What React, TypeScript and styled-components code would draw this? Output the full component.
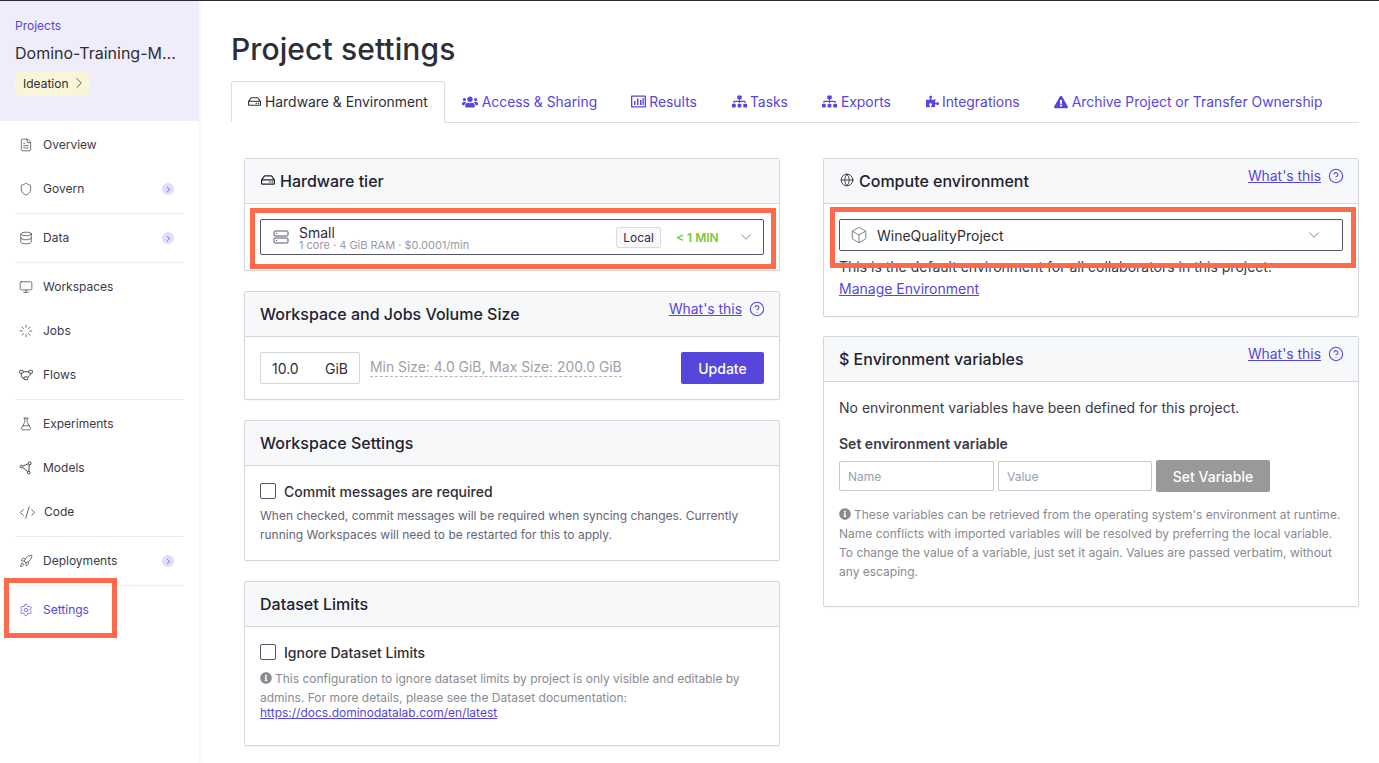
import React from 'react';
import styled, { createGlobalStyle } from 'styled-components';
import { FaUsers, FaSitemap, FaPuzzlePiece, FaExclamationTriangle, FaRegHdd, FaInfoCircle } from 'react-icons/fa';
import { FileText, Shield, Database, Monitor, Loader, FlaskConical, CodeXml, Rocket, Settings, Box, ChevronDown, ChevronRight, CircleHelp, Globe } from 'lucide-react';

const Global = createGlobalStyle`
  html, body { margin: 0; padding: 0; background: #fff; }
  body { font-family: Inter, "Liberation Sans", sans-serif; color: #2e2e38; overflow: hidden; }
  * { box-sizing: border-box; }
`;

const Page = styled.div`
  width: 1379px; height: 763px; display: flex; border-top: 1px solid #2b2b38; overflow: hidden; position: relative;
`;
const Sidebar = styled.aside`
  width: 199px; flex: none; box-shadow: 1px 0 3px rgba(40, 40, 80, 0.05); display: flex; flex-direction: column;
`;
const ProjectHead = styled.div`
  height: 120px; background: #efedfb; padding: 17px 15px 0; flex: none;
`;
const Crumb = styled.div`font-size: 12px; line-height: 16px; color: #5746dc;`;
const ProjectName = styled.div`font-size: 16px; line-height: 20px; margin-top: 9px; color: #2e2e38; white-space: nowrap;`;
const Stage = styled.div`
  display: flex; align-items: center; gap: 1px; margin-top: 9px; height: 24px; padding: 0 0 2px 8px; width: 74px;
  background: #f9f5d8; border-radius: 3px; font-size: 12px; color: #2e2e38;
`;
const Nav = styled.nav`padding: 2px 15px 0; display: flex; flex-direction: column;`;
const NavItem = styled.div<{ $active?: boolean }>`
  height: 44px; display: flex; align-items: center; gap: 10px; padding-left: 4px; padding-right: 10px;
  font-size: 12px; letter-spacing: 0; color: ${p => (p.$active ? '#5746dc' : '#3a3a48')};
  svg { flex: none; }
`;
const NavLabel = styled.span`flex: 1; margin-top: -2px;`;
const CodeIcon = styled(CodeXml)`margin-right: -2px;`;
const Expander = styled.span`
  width: 12px; height: 12px; border-radius: 50%; background: #e0ddf8; color: #6c5ee0;
  display: flex; align-items: center; justify-content: center;
`;
const NavDivider = styled.div`height: 1px; background: #ececf0; margin: 2px 0;`;

const Main = styled.main`flex: 1; padding: 30px 20px 0 32px; min-width: 0;`;
const Title = styled.h1`font-size: 30px; line-height: 36px; font-weight: 500; letter-spacing: 0.1px; margin: 0; color: #2e2e38;`;
const Tabs = styled.div`
  display: flex; margin-top: 14px; height: 42px; border-bottom: 1px solid #dcdee2;
`;
const Tab = styled.div<{ $active?: boolean; $l: number; $r: number; $gap?: number }>`
  height: 42px; display: flex; align-items: center; gap: ${p => p.$gap ?? 4}px; font-size: 13.9px; white-space: nowrap;
  padding: 0 ${p => p.$r}px 1px ${p => p.$l}px;
  color: ${p => (p.$active ? '#2e2e38' : '#5746dc')};
  ${p => p.$active && `background:#fff;border:1px solid #dcdee2;border-bottom:1px solid #fff;border-radius:3px 3px 0 0;`}
`;
const Columns = styled.div`
  display: grid; grid-template-columns: 536px 536px; column-gap: 43px; padding: 35px 0 0 13px; align-items: start;
`;
const Column = styled.div<{ $gap: number }>`display: flex; flex-direction: column; gap: ${p => p.$gap}px;`;
const Card = styled.section<{ $h: number }>`
  border: 1px solid #d4d7dd; border-radius: 2px; height: ${p => p.$h}px; background: #fff;
  box-shadow: 0 1px 1px rgba(40, 40, 60, 0.04);
`;
const CardHead = styled.header`
  height: 45px; background: #f7f8fa; border-bottom: 1px solid #d4d7dd; padding: 0 15px;
  display: flex; justify-content: space-between; font-size: 16px; font-weight: 500; color: #222230;
`;
const HeadTitle = styled.div`display: flex; align-items: center; gap: 5px; height: 100%;`;
const HeadIcon = styled.span`display: flex; margin: -2px 0 0 1px;`;
const What = styled.div`
  display: flex; align-items: flex-start; gap: 7px; padding-top: 9px; margin-right: -1px; font-size: 13.9px; font-weight: 400; color: #5746dc;
`;
const Link = styled.a`color: #5746dc; text-decoration: underline;`;
const ManageLink = styled(Link)`font-size: 14px; line-height: 24px; display: block;`;
const SelectBox = styled.div<{ $h: number }>`
  height: ${p => p.$h}px; border: 1px solid #55556a; border-radius: 2px; display: flex; align-items: center; color: #2e2e38;
`;
const TierBody = styled.div`padding: 15px 15px 0;`;
const TierIcon = styled.span<{ $l: number; $r: number }>`display: flex; margin: 0 ${p => p.$r}px 0 ${p => p.$l}px; color: #55556a;`;
const TierText = styled.div`flex: 1; display: flex; flex-direction: column; padding-top: 1px;`;
const TierName = styled.div`font-size: 14px; line-height: 14px; margin-top: 1px;`;
const EnvName = styled(TierName)`flex: 1;`;
const TierDesc = styled.div`font-size: 11px; line-height: 11px; color: #9a9aa4;`;
const Badge = styled.span`
  width: 45px; height: 21px; border: 1px solid #d9dbe0; background: #f8f8fa; border-radius: 2px; font-size: 12px;
  display: flex; align-items: center; justify-content: center; margin-right: 15px;
`;
const Speed = styled.span`font-size: 12px; font-weight: 600; color: #7cc63a; width: 61px; white-space: nowrap;`;
const Caret = styled.span<{ $r: number }>`display: flex; color: #6f6f80; margin-right: ${p => p.$r}px;`;
const VolumeRow = styled.div`padding: 15px 15px 0; display: flex; align-items: flex-start;`;
const VolumeInput = styled.div`
  width: 100px; height: 32px; border: 1px solid #d4d7dd; border-radius: 2px; display: flex; justify-content: space-between;
  align-items: center; padding: 0 11px; font-size: 14px;
`;
const Limits = styled.span`
  margin: 7px 0 0 10px; font-size: 13.9px; color: #a0a0a8; border-bottom: 1px dashed #b4b4bc; line-height: 17px; flex: none;
`;
const Spacer = styled.div`flex: 1;`;
const PrimaryBtn = styled.div`
  width: 83px; height: 32px; background: #5746dc; color: #fff; border-radius: 2px; font-size: 14px; font-weight: 500;
  display: flex; align-items: center; justify-content: center;
`;
const CheckBody = styled.div`padding: 15px 15px 0;`;
const CheckRow = styled.div`display: flex; align-items: center; gap: 8px; font-size: 14px; font-weight: 500; height: 20px; color: #2e2e38;`;
const Check = styled.span`width: 16px; height: 16px; border: 1px solid #55556a; border-radius: 2px; flex: none;`;
const Help = styled.p`margin: 5px 0 0; font-size: 12px; line-height: 19px; color: #65657a;`;
const Note = styled.p<{ $mt: number }>`margin: ${p => p.$mt}px 0 0; font-size: 12px; line-height: 19px; color: #8a8a92; svg { vertical-align: -1px; margin-right: 3px; }`;
const DocLink = styled.a`display: block; margin-top: -2px; font-size: 12px; line-height: 16px; color: #5746dc; text-decoration: underline;`;
const EnvBody = styled.div`padding: 16px 15px 0;`;
const EnvNote = styled.div`font-size: 14px; line-height: 20px; color: #3a3a48; margin-top: 6px;`;
const Plain = styled.div`font-size: 14px; line-height: 20px; color: #3a3a48;`;
const SubTitle = styled.div`font-size: 14px; font-weight: 600; line-height: 20px; margin-top: 16px; color: #3a3a48;`;
const FormRow = styled.div`display: flex; margin-top: 6px; align-items: center; gap: 4px;`;
const TextInput = styled.div<{ $w: number }>`
  width: ${p => p.$w}px; height: 30px; border: 1px solid #c8cad2; border-radius: 2px; padding: 0 8px;
  display: flex; align-items: center; font-size: 12px; color: #9a9fb0;
`;
const DisabledBtn = styled.div`
  width: 114px; height: 32px; background: #999; color: #fff; border-radius: 2px; font-size: 14px; font-weight: 500;
  display: flex; align-items: center; justify-content: center;
`;
const Highlight = styled.div<{ $x: number; $y: number; $w: number; $h: number }>`
  position: absolute; left: ${p => p.$x}px; top: ${p => p.$y}px; width: ${p => p.$w}px; height: ${p => p.$h}px;
  border: 5px solid #ff6a4a; pointer-events: none;
`;

const I = 14;
const FlowIcon = () => (
  <svg width="14" height="14" viewBox="0 0 15 15" fill="none" stroke="currentColor" strokeWidth="1">
    <rect x="0.5" y="2.5" width="4" height="3" rx="1" /><rect x="10.5" y="2.5" width="4" height="3" rx="1" /><rect x="5.5" y="9.5" width="4" height="3" rx="0.8" />
    <path d="M4.5 4h6M2.5 5.5v3c0 1.5 1 2.5 3 2.5M12.5 5.5v1.5l-3 3" />
  </svg>
);
const ModelIcon = () => (
  <svg width="14" height="14" viewBox="0 0 15 15" fill="none" stroke="currentColor" strokeWidth="1">
    <circle cx="2.5" cy="6" r="1.4" /><circle cx="11.5" cy="2.5" r="1.6" /><circle cx="10.5" cy="12.5" r="1.4" />
    <path d="M4 5.5l6-2.5M4 7l5.5 4.5M11 4l-.4 7" />
  </svg>
);
const ChartIcon = () => (
  <svg width="15" height="13" viewBox="0 0 15 13" fill="currentColor">
    <path fillRule="evenodd" d="M0.8 0.5h13.4a.8.8 0 0 1 .8.8v10.4a.8.8 0 0 1-.8.8H.8a.8.8 0 0 1-.8-.8V1.3a.8.8 0 0 1 .8-.8zM1.3 1.8v9.4h12.4V1.8z" />
    <rect x="3" y="6" width="1.5" height="4" /><rect x="6" y="3.5" width="1.5" height="6.5" /><rect x="9" y="5" width="1.5" height="5" /><rect x="11.5" y="3" width="1.3" height="7" />
  </svg>
);
const ServerIcon = () => (
  <svg width="16" height="14" viewBox="0 0 16 14" fill="none" stroke="currentColor" strokeWidth="1">
    <rect x="1" y="1" width="14" height="5" rx="1" /><rect x="1" y="8" width="14" height="5" rx="1" />
    <path d="M3 3.5h1M3 10.5h1" />
  </svg>
);
const Exp = () => <Expander><ChevronRight size={9} strokeWidth={2.5} /></Expander>;

const Whats = () => (
  <What><Link>What's this</Link><CircleHelp size={16} strokeWidth={1.6} /></What>
);

export default function App() {
  return (
    <Page>
      <Global />
      <Sidebar>
        <ProjectHead>
          <Crumb>Projects</Crumb>
          <ProjectName>Domino-Training-M...</ProjectName>
          <Stage>Ideation<ChevronRight size={18} strokeWidth={1} /></Stage>
        </ProjectHead>
        <Nav>
          <NavItem><FileText size={I} strokeWidth={1.2} /><NavLabel>Overview</NavLabel></NavItem>
          <NavItem><Shield size={I} strokeWidth={1.2} /><NavLabel>Govern</NavLabel><Exp /></NavItem>
          <NavDivider />
          <NavItem><Database size={I} strokeWidth={1.2} /><NavLabel>Data</NavLabel><Exp /></NavItem>
          <NavDivider />
          <NavItem><Monitor size={I} strokeWidth={1.2} /><NavLabel>Workspaces</NavLabel></NavItem>
          <NavItem><Loader size={I} strokeWidth={1.2} /><NavLabel>Jobs</NavLabel></NavItem>
          <NavItem><FlowIcon /><NavLabel>Flows</NavLabel></NavItem>
          <NavDivider />
          <NavItem><FlaskConical size={I} strokeWidth={1.2} /><NavLabel>Experiments</NavLabel></NavItem>
          <NavItem><ModelIcon /><NavLabel>Models</NavLabel></NavItem>
          <NavItem><CodeIcon size={17} strokeWidth={1.1} /><NavLabel>Code</NavLabel></NavItem>
          <NavDivider />
          <NavItem><Rocket size={I} strokeWidth={1.2} /><NavLabel>Deployments</NavLabel><Exp /></NavItem>
          <NavDivider />
          <NavItem $active><Settings size={I} strokeWidth={1.2} /><NavLabel>Settings</NavLabel></NavItem>
        </Nav>
      </Sidebar>
      <Main>
        <Title>Project settings</Title>
        <Tabs>
          <Tab $active $l={16} $r={16}><FaRegHdd size={13} />Hardware &amp; Environment</Tab>
          <Tab $l={17} $r={17}><FaUsers size={16} />Access &amp; Sharing</Tab>
          <Tab $l={17} $r={18} $gap={3}><ChartIcon />Results</Tab>
          <Tab $l={17} $r={17} $gap={3}><FaSitemap size={15} />Tasks</Tab>
          <Tab $l={17} $r={18}><FaSitemap size={15} />Exports</Tab>
          <Tab $l={17} $r={17} $gap={3}><FaPuzzlePiece size={13} />Integrations</Tab>
          <Tab $l={17} $r={17}><FaExclamationTriangle size={14} />Archive Project or Transfer Ownership</Tab>
        </Tabs>
        <Columns>
          <Column $gap={20}>
            <Card $h={113}>
              <CardHead><HeadTitle><HeadIcon><FaRegHdd size={14} /></HeadIcon>Hardware tier</HeadTitle></CardHead>
              <TierBody>
                <SelectBox $h={36}>
                  <TierIcon $l={12} $r={10}><ServerIcon /></TierIcon>
                  <TierText><TierName>Small</TierName><TierDesc>1 core · 4 GiB RAM · $0.0001/min</TierDesc></TierText>
                  <Badge>Local</Badge>
                  <Speed>&lt; 1 MIN</Speed>
                  <Caret $r={8}><ChevronDown size={18} strokeWidth={1.1} /></Caret>
                </SelectBox>
              </TierBody>
            </Card>
            <Card $h={109}>
              <CardHead><HeadTitle>Workspace and Jobs Volume Size</HeadTitle><Whats /></CardHead>
              <VolumeRow>
                <VolumeInput><span>10.0</span><span>GiB</span></VolumeInput>
                <Limits>Min Size: 4.0 GiB, Max Size: 200.0 GiB</Limits>
                <Spacer />
                <PrimaryBtn>Update</PrimaryBtn>
              </VolumeRow>
            </Card>
            <Card $h={141}>
              <CardHead><HeadTitle>Workspace Settings</HeadTitle></CardHead>
              <CheckBody>
                <CheckRow><Check />Commit messages are required</CheckRow>
                <Help>When checked, commit messages will be required when syncing changes. Currently running Workspaces will need to be restarted for this to apply.</Help>
              </CheckBody>
            </Card>
            <Card $h={165}>
              <CardHead><HeadTitle>Dataset Limits</HeadTitle></CardHead>
              <CheckBody>
                <CheckRow><Check />Ignore Dataset Limits</CheckRow>
                <Note $mt={7}><FaInfoCircle size={12} />This configuration to ignore dataset limits by project is only visible and editable by admins. For more details, please see the Dataset documentation:</Note>
                <DocLink>https://docs.dominodatalab.com/en/latest</DocLink>
              </CheckBody>
            </Card>
          </Column>
          <Column $gap={19}>
            <Card $h={159}>
              <CardHead><HeadTitle><HeadIcon><Globe size={14} strokeWidth={1.4} /></HeadIcon>Compute environment</HeadTitle><Whats /></CardHead>
              <TierBody>
                <SelectBox $h={32}>
                  <TierIcon $l={10} $r={9}><Box size={18} strokeWidth={1} /></TierIcon>
                  <EnvName>WineQualityProject</EnvName>
                  <Caret $r={19}><ChevronDown size={18} strokeWidth={1.1} /></Caret>
                </SelectBox>
                <EnvNote>This is the default environment for all collaborators in this project.</EnvNote>
                <ManageLink>Manage Environment</ManageLink>
              </TierBody>
            </Card>
            <Card $h={271}>
              <CardHead><HeadTitle>$ Environment variables</HeadTitle><Whats /></CardHead>
              <EnvBody>
                <Plain>No environment variables have been defined for this project.</Plain>
                <SubTitle>Set environment variable</SubTitle>
                <FormRow>
                  <TextInput $w={155}>Name</TextInput>
                  <TextInput $w={154}>Value</TextInput>
                  <DisabledBtn>Set Variable</DisabledBtn>
                </FormRow>
                <Note $mt={13}><FaInfoCircle size={12} />These variables can be retrieved from the operating system's environment at runtime. Name conflicts with imported variables will be resolved by preferring the local variable. To change the value of a variable, just set it again. Values are passed verbatim, without any escaping.</Note>
              </EnvBody>
            </Card>
          </Column>
        </Columns>
      </Main>
      <Highlight $x={250} $y={207} $w={526} $h={61} />
      <Highlight $x={830} $y={206} $w={526} $h={61} />
      <Highlight $x={4} $y={577} $w={113} $h={60} />
    </Page>
  );
}
